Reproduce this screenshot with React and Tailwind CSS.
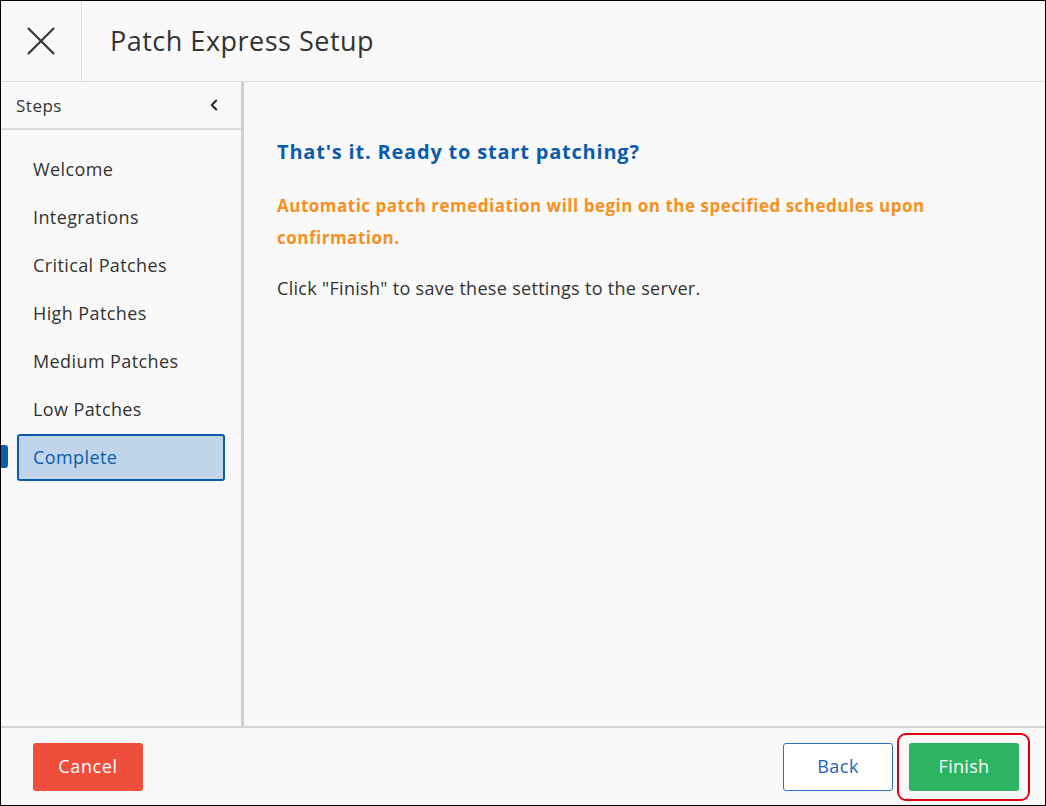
import { X, ChevronLeft } from "lucide-react";

const steps = [
  "Welcome",
  "Integrations",
  "Critical Patches",
  "High Patches",
  "Medium Patches",
  "Low Patches",
  "Complete",
];

export default function App() {
  return (
    <div
      className="w-[1046px] h-[806px] bg-[#f9f9f9] border border-black flex flex-col text-[#333]"
      style={{ fontFamily: '"Open Sans", sans-serif' }}
    >
      {/* header */}
      <div className="h-[81px] shrink-0 flex border-b border-[#dcdcdc]">
        <div className="w-[81px] flex items-center justify-center border-r border-[#dcdcdc]">
          <X size={50} strokeWidth={1} className="text-[#333]" />
        </div>
        <h1 className="pl-[28px] flex items-center text-[27px] tracking-[0.5px] text-[#333]">
          Patch Express Setup
        </h1>
      </div>

      {/* body */}
      <div className="flex-1 flex min-h-0">
        <div className="w-[243px] shrink-0 border-r-[3px] border-[#d0d0d0] flex flex-col">
          <div className="h-[48px] flex items-center justify-between pl-[15px] pr-[18px] border-b-2 border-[#dcdcdc] text-[17px] tracking-[0.5px]">
            <span className="pt-[2px]">Steps</span>
            <ChevronLeft size={18} strokeWidth={2.5} className="text-[#222]" />
          </div>
          <nav className="pt-[16px] flex flex-col">
            {steps.map((s) => {
              const active = s === "Complete";
              return (
                <div key={s} className="relative h-[46px] mb-[2px]">
                  {active && (
                    <span className="absolute left-0 top-[11px] w-[7px] h-[23px] bg-[#0b5cad] rounded-r-[3px]" />
                  )}
                  <div
                    className={
                      active
                        ? "ml-[16px] w-[208px] h-[47px] flex items-center pl-[14px] rounded-[3px] border-2 border-[#0b5cad] bg-[#c0d5ea] text-[#0b5cad] text-[18px] tracking-[0.4px]"
                        : "ml-[16px] w-[208px] h-full flex items-center pl-[16px] text-[18px] tracking-[0.4px]"
                    }
                  >
                    {s}
                  </div>
                </div>
              );
            })}
          </nav>
        </div>

        <main className="flex-1 pl-[33px] pt-[57px]">
          <h2 className="text-[20px] leading-[26px] font-bold tracking-[0.8px] text-[#0b5cad]">
            That's it. Ready to start patching?
          </h2>
          <p className="mt-[25px] text-[17px] leading-[32px] font-bold tracking-[0.5px] text-[#f7901e] pr-[80px]">
            Automatic patch remediation will begin on the specified schedules upon confirmation.
          </p>
          <p className="mt-[18px] text-[18px] leading-[32px] tracking-[0.3px] text-[#333]">
            Click "Finish" to save these settings to the server.
          </p>
        </main>
      </div>

      {/* footer */}
      <div className="h-[79px] shrink-0 border-t-2 border-[#d4d4d4] flex items-center justify-between pl-[32px] pr-[26px]">
        <button className="w-[110px] h-[48px] rounded-[3px] bg-[#ee4e3b] text-white text-[18px] tracking-[0.6px]">
          Cancel
        </button>
        <div className="flex gap-[16px]">
          <button className="w-[110px] h-[48px] rounded-[3px] border border-[#2d72c2] bg-white text-[#1e64b4] text-[18px] tracking-[0.5px]">
            Back
          </button>
          <div className="relative">
            <button className="w-[110px] h-[48px] rounded-[3px] bg-[#2cb462] text-white text-[18px] tracking-[0.3px]">
              Finish
            </button>
            <span className="absolute -left-[12px] -right-[11px] -top-[10px] -bottom-[10px] border-2 border-[#e00012] rounded-[9px]" />
          </div>
        </div>
      </div>
    </div>
  );
}
